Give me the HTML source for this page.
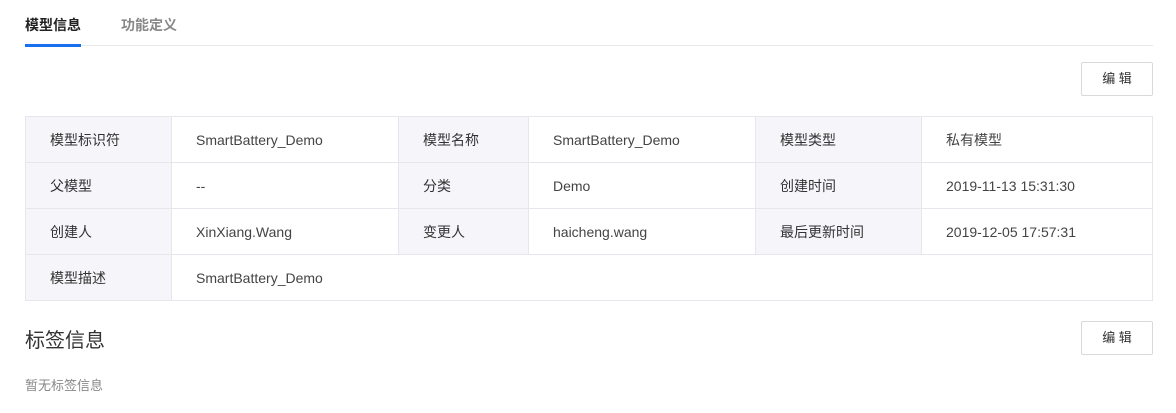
<!DOCTYPE html><html><head><style>
body{margin:0;background:#fff;font-family:"Liberation Sans","Noto Sans CJK SC",sans-serif;width:1176px;height:413px;position:relative;overflow:hidden}
.a{position:absolute}
.tab{font-size:14px;font-weight:bold;top:15px}
table{position:absolute;left:25px;top:116px;width:1128px;border-collapse:collapse;font-size:14px;color:#444}
td{border:1px solid #e6e6ec;height:46px;padding:0 0 0 24px;box-sizing:border-box}
td.l{background:#f6f6fa;color:#333}
.btn{position:absolute;left:1081px;width:70px;height:32px;border:1px solid #d9d9d9;border-radius:2px;font-size:13px;text-align:center;line-height:32px;color:#333;background:#fff}
</style></head><body>
<div class="a tab" style="left:25px;color:#222">模型信息</div>
<div class="a tab" style="left:121px;color:#888">功能定义</div>
<div class="a" style="left:25px;top:45px;width:1128px;height:1px;background:#e8e8e8"></div>
<div class="a" style="left:25px;top:44px;width:56px;height:3px;background:#1a6ef0"></div>
<div class="btn" style="top:62px">编 辑</div>
<table>
<colgroup><col style="width:146px"><col style="width:227px"><col style="width:130px"><col style="width:227px"><col style="width:166px"><col></colgroup>
<tr><td class="l">模型标识符</td><td>SmartBattery_Demo</td><td class="l">模型名称</td><td>SmartBattery_Demo</td><td class="l">模型类型</td><td>私有模型</td></tr>
<tr><td class="l">父模型</td><td>--</td><td class="l">分类</td><td>Demo</td><td class="l">创建时间</td><td>2019-11-13 15:31:30</td></tr>
<tr><td class="l">创建人</td><td>XinXiang.Wang</td><td class="l">变更人</td><td>haicheng.wang</td><td class="l">最后更新时间</td><td>2019-12-05 17:57:31</td></tr>
<tr><td class="l">模型描述</td><td colspan="5">SmartBattery_Demo</td></tr>
</table>
<div class="a" style="left:25px;top:324px;font-size:20px;color:#333">标签信息</div>
<div class="btn" style="top:321px">编 辑</div>
<div class="a" style="left:25px;top:375px;font-size:13px;color:#888">暂无标签信息</div>
</body></html>
